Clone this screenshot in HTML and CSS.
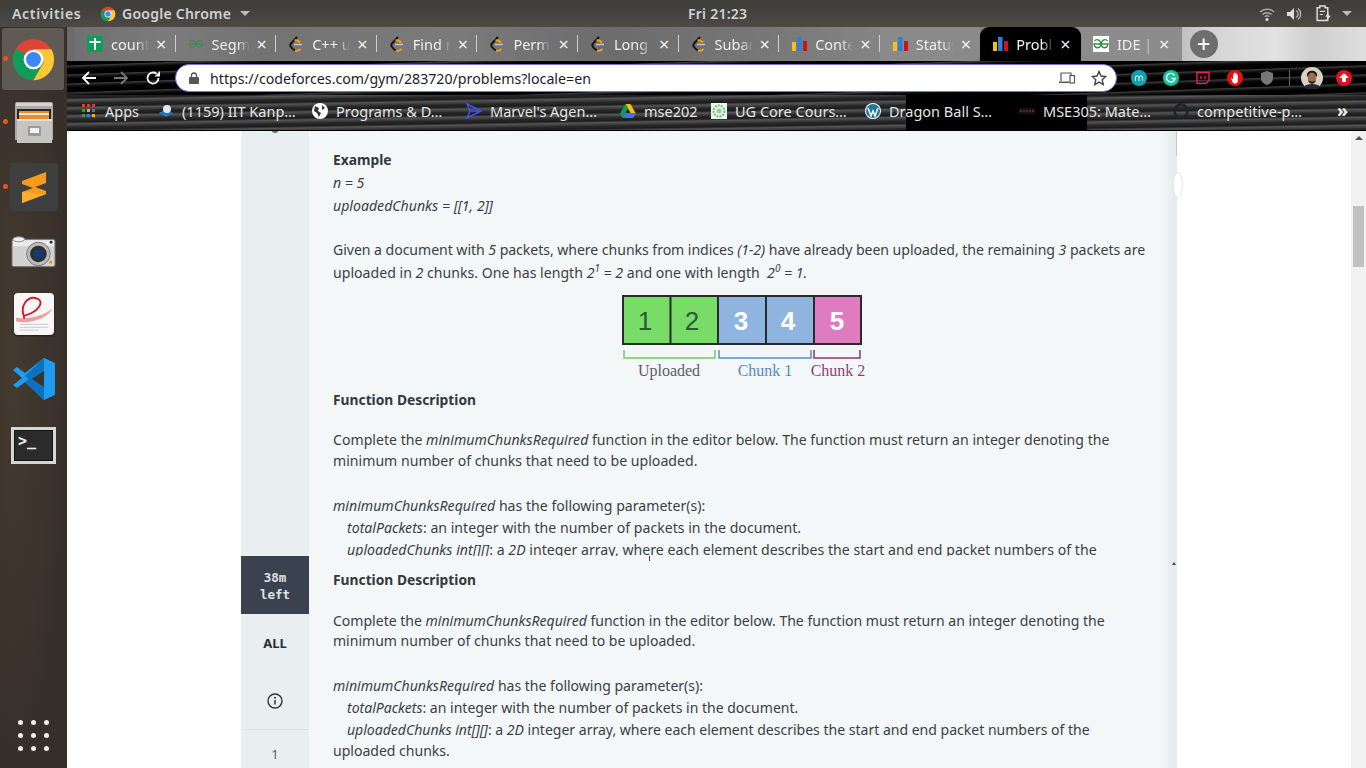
FILE: index.html
```html
<!DOCTYPE html>
<html lang="en">
<head>
<meta charset="utf-8">
<title>Problems</title>
<link rel="stylesheet" href="styles.css">
</head>
<body>
<header class="topbar">
  <span class="activities">Activities</span>
  <span class="appmenu">
    <svg class="chromeglyph" viewBox="0 0 48 48"><use href="#chrome"/></svg>
    Google Chrome <i class="caret"></i>
  </span>
  <span class="clock">Fri 21:23</span>
  <span class="tray">
    <svg class="t1" viewBox="0 0 16 16"><path d="M1 6a10 10 0 0 1 14 0M3.500 8.500a6.500 6.500 0 0 1 9 0M5.800 10.800a3.200 3.200 0 0 1 4.400 0" fill="none" stroke="#aaa" stroke-width="1.500"/><circle cx="8" cy="13.500" r="1.600" fill="#ddd"/></svg>
    <svg class="t2" viewBox="0 0 16 16"><path d="M1 6h3l4-4v12l-4-4H1z" fill="#ddd"/><path d="M10 4.500a4 4 0 0 1 0 7M12 2.500a7 7 0 0 1 0 11" fill="none" stroke="#bbb" stroke-width="1.300"/></svg>
    <svg class="t3" viewBox="0 0 16 16"><path d="M2 2.500h2.500V1h5v1.500H12v12H2z" fill="none" stroke="#ddd" stroke-width="1.400"/><path d="M4.500 6h5M4.500 9h3" stroke="#ddd"/><path d="M12.500 7l-3 4h2l-1 4 4.500-5h-2z" fill="#ddd"/></svg>
    <i class="caret"></i>
  </span>
</header>

<div class="desktop">
  <aside class="dock">
    <div class="dockitem tile"><i class="pip"></i>
      <svg class="ic52" viewBox="0 0 48 48"><use href="#chrome"/></svg></div>
    <div class="dockitem files"><i class="pip"></i>
      <svg class="ic48" viewBox="0 0 40 41"><path d="M2 0h36l1 2v36H1V2z" fill="#a9a9a6"/><rect x="2" y="1" width="36" height="3" fill="#d4d4d1"/><rect x="3" y="7" width="34" height="12" fill="#2d241b"/><rect x="5" y="9" width="30" height="10" fill="#e88c2f"/><rect x="5" y="11" width="30" height="2" fill="#fde9c9"/><rect x="3" y="17" width="35" height="24" fill="#c4c4c1"/><rect x="3" y="17" width="35" height="2" fill="#e2e2df"/><rect x="14" y="24" width="13" height="10" rx="1" fill="#9a9a97"/><rect x="16" y="26" width="9" height="5" fill="#f2f2f0"/></svg></div>
    <div class="dockitem sublime"><i class="pip"></i>
      <div class="sublimetile"><svg class="ic32" viewBox="0 0 24 31"><path d="M0 9L24 0v11L13 15l11 4v3L0 31V20l11-4-11-4z" fill="#f89a1c"/><path d="M0 20l24 2L0 31z" fill="#fbae2c"/></svg></div></div>
    <div class="dockitem cam">
      <svg class="ic46" viewBox="0 0 46 32"><rect x="1" y="3" width="44" height="28" rx="2" fill="#d2d2d2" stroke="#6d6d6d"/><rect x="2" y="4" width="42" height="6" fill="#ececec"/><circle cx="28" cy="18" r="12" fill="#bbb" stroke="#777"/><circle cx="28" cy="18" r="8.500" fill="#2f2f2f"/><rect x="23" y="14" width="10" height="8" rx="2" fill="#123a75"/><rect x="39" y="25" width="3" height="3" fill="#e69a1f"/><ellipse cx="8" cy="3" rx="6" ry="2.500" fill="#f0f0f0" stroke="#888"/><circle cx="41" cy="6" r="1.500" fill="#333"/></svg></div>
    <div class="dockitem doc">
      <div class="pdf"><svg class="ic40" viewBox="0 0 40 40"><path d="M1 24c14 2 29-2 39-10-6 11-24 17-39 14z" fill="#e8a0a5"/><path d="M10 25C4 10 14 0 24 4c7 3 1 14-15 18" fill="none" stroke="#d01c28" stroke-width="2"/><path d="M5 31h30M5 34h30M5 37h20" stroke="#c9c9c9"/></svg></div></div>
    <div class="dockitem code">
      <svg class="ic44" viewBox="0 0 44 44"><path d="M32 1l11 5v32l-11 5-19-18-8 6-4-3 9-7-9-8 4-3 8 6z" fill="#1f9cf0"/><path d="M32 1l-19 18 7 6 12-10v14l-12-10-7 6 19 18z" fill="#0d72bd"/><path d="M32 14L20 22l12 8z" fill="#3c342c"/></svg></div>
    <div class="dockitem term">
      <div class="termbox"><span class="prompt">&gt;_</span></div></div>
    <div class="dots"><i></i><i></i><i></i><i></i><i></i><i></i><i></i><i></i><i></i></div>
  </aside>

  <div class="browser">
    <nav class="tabstrip">
      <div class="tab"><svg class="fav" viewBox="0 0 16 16"><rect width="16" height="16" rx="1" fill="#0f9d58"/><path d="M2.500 6h11M8 2v12" stroke="#fff" stroke-width="2"/></svg><span class="tabtext">count</span><span class="x">×</span></div>
      <div class="tab"><svg class="fav" viewBox="0 0 16 16"><use href="#gfgs"/></svg><span class="tabtext">Segment</span><span class="x">×</span></div>
      <div class="tab"><svg class="fav" viewBox="0 0 16 16"><use href="#leet"/></svg><span class="tabtext">C++ u</span><span class="x">×</span></div>
      <div class="tab"><svg class="fav" viewBox="0 0 16 16"><use href="#leet"/></svg><span class="tabtext">Find r</span><span class="x">×</span></div>
      <div class="tab"><svg class="fav" viewBox="0 0 16 16"><use href="#leet"/></svg><span class="tabtext">Perm</span><span class="x">×</span></div>
      <div class="tab"><svg class="fav" viewBox="0 0 16 16"><use href="#leet"/></svg><span class="tabtext">Long</span><span class="x">×</span></div>
      <div class="tab"><svg class="fav" viewBox="0 0 16 16"><use href="#leet"/></svg><span class="tabtext">Subar</span><span class="x">×</span></div>
      <div class="tab"><svg class="fav" viewBox="0 0 16 16"><use href="#bars"/></svg><span class="tabtext">Conte</span><span class="x">×</span></div>
      <div class="tab last"><svg class="fav" viewBox="0 0 16 16"><use href="#bars"/></svg><span class="tabtext">Status</span><span class="x">×</span></div>
      <div class="tab active"><svg class="fav" viewBox="0 0 16 16"><use href="#bars"/></svg><span class="tabtext">Probl</span><span class="x">×</span></div>
      <div class="tab ide"><svg class="fav" viewBox="0 0 16 16"><rect width="16" height="16" fill="#fff"/><use href="#gfg"/></svg><span class="tabtext">IDE | G</span><span class="x">×</span></div>
      <span class="newtab">+</span>
    </nav>

    <div class="toolbar">
      <svg class="navicon" viewBox="0 0 16 16"><path d="M15 8H2M8 2L2 8l6 6" fill="none" stroke="#fff" stroke-width="1.800"/></svg>
      <svg class="navicon" viewBox="0 0 16 16"><path d="M1 8h13M8 2l6 6-6 6" fill="none" stroke="#777" stroke-width="1.800"/></svg>
      <svg class="navicon" viewBox="0 0 16 16"><path d="M13.500 8A5.500 5.500 0 1 1 11.500 3.800" fill="none" stroke="#fff" stroke-width="1.800"/><path d="M9.500 6.500H15V1z" fill="#fff"/></svg>
      <div class="omnibox">
        <svg class="lock" viewBox="0 0 10 12"><path d="M2.500 5V3.500a2.500 2.500 0 0 1 5 0V5" fill="none" stroke="#555" stroke-width="1.300"/><rect y="5" width="10" height="7" rx="1" fill="#555"/></svg>
        <span class="url">https://codeforces.com/gym/283720/problems?locale=en</span>
        <svg class="devices" viewBox="0 0 16 12"><path d="M2 9V1h10v2" fill="none" stroke="#555" stroke-width="1.200"/><path d="M0 9.500h10v1.500H0z" fill="#555"/><rect x="11" y="3.500" width="4.500" height="7.500" fill="none" stroke="#555" stroke-width="1.200"/></svg>
        <svg class="star" viewBox="0 0 16 16"><path d="M8 1.500l2 4.500 4.800.5-3.600 3.200 1 4.800L8 12.100l-4.200 2.400 1-4.800L1.200 6.500 6 6z" fill="none" stroke="#444" stroke-width="1.400"/></svg>
      </div>
      <div class="exts">
        <svg class="ext" viewBox="0 0 16 16"><circle cx="8" cy="8" r="8" fill="#0fa3b1"/><path d="M4.500 11V6.500M4.500 7.500c0-2 3.500-2 3.500 0V11M8 7.500c0-2 3.500-2 3.500 0V11" fill="none" stroke="#fff"/></svg>
        <svg class="ext" viewBox="0 0 16 16"><circle cx="8" cy="8" r="8" fill="#15c39a"/><path d="M11.500 5.500a4.300 4.300 0 1 0 .5 3H8.500" fill="none" stroke="#fff" stroke-width="1.400"/></svg>
        <svg class="ext" viewBox="0 0 16 16"><path d="M2 2.500h12v8l-3 3H2z" fill="none" stroke="#e0245e" stroke-width="1.400"/><path d="M6 6v3M10 6v3" stroke="#e0245e" stroke-width="1.400"/></svg>
        <svg class="ext" viewBox="0 0 16 16"><circle cx="8" cy="8" r="8" fill="#e60f0f"/><path d="M4 7.500l2 2V4.500a.6.6 0 0 1 1.200 0V7V3a.6.6 0 0 1 1.200 0v4V3.500a.6.6 0 0 1 1.200 0V7.500V5a.6.6 0 0 1 1.200 0v6c0 1.500-1 2.500-2.500 2.500H7.500C6 13.500 5.500 12 5 11z" fill="#fff"/></svg>
        <svg class="ext" viewBox="0 0 16 16"><path d="M8 1l6 2v5c0 4-3 6-6 7-3-1-6-3-6-7V3z" fill="#777"/></svg>
        <i class="extsep"></i>
        <svg class="avatar" viewBox="0 0 22 22"><circle cx="11" cy="11" r="11" fill="#d8d2c4"/><path d="M6 9C5 2 17 2 16 9l-1 1H7z" fill="#1d1712"/><ellipse cx="11" cy="11" rx="4.200" ry="5.500" fill="#9c6c4e"/><path d="M7 13c1 5 7 5 8 0-1 2-7 2-8 0z" fill="#251a14"/><path d="M3 20c2-4 14-4 16 0a11 11 0 0 1-16 0z" fill="#232a33"/></svg>
        <svg class="ext" viewBox="0 0 16 16"><circle cx="8" cy="8" r="8" fill="#e60f1d"/><path d="M8 3l5 5h-3v4H6V8H3z" fill="#fff"/></svg>
      </div>
    </div>

    <div class="bookmarks">
      <div class="bm apps"><svg class="fav" viewBox="0 0 13 13"><path d="M0 0h3v3H0z" fill="#e23b2e"/><path d="M5 0h3v3H5z" fill="#e23b2e"/><path d="M10 0h3v3h-3z" fill="#e23b2e"/><path d="M0 5h3v3H0z" fill="#2f9e44"/><path d="M5 5h3v3H5z" fill="#f4b400"/><path d="M10 5h3v3h-3z" fill="#3b78e7"/><path d="M0 10h3v3H0z" fill="#2f9e44"/><path d="M5 10h3v3H5z" fill="#3b78e7"/><path d="M10 10h3v3h-3z" fill="#f4b400"/></svg><span>Apps</span></div>
      <div class="bm"><svg class="fav" viewBox="0 0 16 16"><path d="M1 10l7-4 7 4-7 4z" fill="#1b78c8"/><circle cx="9" cy="6" r="4" fill="#e3e7ea"/></svg><span>(1159) IIT Kanp…</span></div>
      <div class="bm"><svg class="fav" viewBox="0 0 16 16"><circle cx="8" cy="8" r="8" fill="#fff"/><path d="M3 3l4 2-1 3 3 2-2 4-2-4-3-2zM10 2l3 3-3 2z" fill="#333"/></svg><span>Programs &amp; D…</span></div>
      <div class="bm"><svg class="fav" viewBox="0 0 16 16"><path d="M1 1l14 7-14 7 3-7zM4 8h11" fill="none" stroke="#3f51e5" stroke-width="1.600"/></svg><span>Marvel's Agen…</span></div>
      <div class="bm short"><svg class="fav" viewBox="0 0 16 16"><path d="M5.500 1h5l5 9h-5z" fill="#f4c20d"/><path d="M5.500 1L0 10.500 2.600 15l5.200-9z" fill="#0f9d58"/><path d="M2.600 15h10.500l2.900-5H5.300z" fill="#3b78e7"/></svg><span>mse202</span></div>
      <div class="bm"><svg class="fav" viewBox="0 0 16 16"><rect width="16" height="16" fill="#eef5ee"/><circle cx="8" cy="8" r="5.500" fill="none" stroke="#6cc07a" stroke-width="2" stroke-dasharray="2 1"/><circle cx="8" cy="8" r="2.500" fill="#8fd19a"/></svg><span>UG Core Cours…</span></div>
      <div class="bm"><svg class="fav" viewBox="0 0 16 16"><circle cx="8" cy="8" r="8" fill="#fff"/><circle cx="8" cy="8" r="7" fill="#21759b"/><path d="M3 5l3 8 2-5 2 5 3-8" fill="none" stroke="#fff" stroke-width="1.500"/></svg><span>Dragon Ball S…</span></div>
      <div class="bm"><svg class="fav" viewBox="0 0 16 6"><rect width="16" height="6" fill="#1c1010"/><path d="M1 3h14" stroke="#6d2222" stroke-width="2" stroke-dasharray="2 1"/></svg><span>MSE305: Mate…</span></div>
      <div class="bm"><svg class="fav" viewBox="0 0 16 16"><circle cx="8" cy="8" r="6.500" fill="none" stroke="#1d2430" stroke-width="2.600"/></svg><span>competitive-p…</span></div>
      <span class="more">»</span>
    </div>

    <main class="page">
      <div class="panel">
        <section class="sheet upper">
          <div class="rail railtop"><i class="remnant"></i></div>
          <div class="prose">
            <p class="h h-ex">Example</p>
            <p class="l"><em>n = 5</em></p>
            <p class="l"><em>uploadedChunks = [[1, 2]]</em></p>
            <p class="l gap-a tight">Given a document with <em>5</em> packets, where chunks from indices <em>(1-2)</em> have already been uploaded, the remaining <em>3</em> packets are</p>
            <p class="l">uploaded in <em>2</em> chunks. One has length <em>2<sup>1</sup> = 2</em> and one with length <em>&nbsp;2<sup>0</sup> = 1.</em></p>
            <svg class="diagram" viewBox="0 0 245 86" role="img" aria-label="Chunks diagram">
              <rect x="1" y="1" width="47.500" height="48" fill="#77dd66"/>
              <rect x="48.500" y="1" width="47.500" height="48" fill="#77dd66"/>
              <rect x="96" y="1" width="48" height="48" fill="#8fb4e0"/>
              <rect x="144" y="1" width="48" height="48" fill="#8fb4e0"/>
              <rect x="192" y="1" width="47" height="48" fill="#df7cc0"/>
              <path d="M1 1h238v48H1zM48.500 1v48M96 1v48M144 1v48M192 1v48" fill="none" stroke="#2a2a2a" stroke-width="2"/>
              <text class="d-num dark" x="23" y="35">1</text>
              <text class="d-num dark" x="70" y="35">2</text>
              <text class="d-num bold" x="119" y="35">3</text>
              <text class="d-num bold" x="166" y="35">4</text>
              <text class="d-num bold" x="215" y="35">5</text>
              <path d="M2 55v8h91v-8" fill="none" stroke="#7cc468" stroke-width="1.500"/>
              <path d="M97 55v8h92v-8" fill="none" stroke="#5a8fc4" stroke-width="1.500"/>
              <path d="M192 55v8h46v-8" fill="none" stroke="#8b3a6a" stroke-width="1.500"/>
              <text class="d-lab c-u" x="47" y="81">Uploaded</text>
              <text class="d-lab c-1" x="143" y="81">Chunk 1</text>
              <text class="d-lab c-2" x="216" y="81">Chunk 2</text>
            </svg>
            <p class="h h-fd">Function Description</p>
            <p class="l gap-b">Complete the <em>minimumChunksRequired</em> function in the editor below. The function must return an integer denoting the</p>
            <p class="l l3">minimum number of chunks that need to be uploaded.</p>
            <p class="l gap-c"><em>minimumChunksRequired</em> has the following parameter(s):</p>
            <p class="l ind"><em>totalPackets</em>: an integer with the number of packets in the document.</p>
            <p class="l ind wide up"><em>uploadedChunks int[][]</em>: a <em>2D</em> integer array, <span class="sq-g">where each</span> elem<span class="sq-b">ent des</span>crib<span class="sq-g">es the s</span>tart and end packet numbers of the</p>
          </div>
        </section>
        <section class="sheet lower">
          <div class="rail">
            <div class="timer">38m<br>left</div>
            <div class="allbtn">ALL</div>
            <div class="infobtn"><svg class="info" viewBox="0 0 16 16"><circle cx="8" cy="8" r="7" fill="none" stroke="#333" stroke-width="1.400"/><path d="M8 7v4.500" stroke="#333" stroke-width="1.500"/><circle cx="8" cy="4.800" r="1" fill="#333"/></svg></div>
            <div class="railnum">1</div>
          </div>
          <div class="prose second">
            <p class="h h-fd2">Function Description</p>
            <p class="m gap-d">Complete the <em>minimumChunksRequired</em> function in the editor below. The function must return an integer denoting the</p>
            <p class="m">minimum number of chunks that need to be uploaded.</p>
            <p class="m gap-e"><em>minimumChunksRequired</em> has the following parameter(s):</p>
            <p class="m m2 ind nudge"><em>totalPackets</em>: an integer with the number of packets in the document.</p>
            <p class="m m2 ind"><em>uploadedChunks int[][]</em>: a <em>2D</em> integer array, where each element describes the start and end packet numbers of the</p>
            <p class="m">uploaded chunks.</p>
          </div>
        </section>
      </div>
      <i class="edge-line"></i>
      <i class="edge-handle"></i>
      <i class="edge-arrow"></i>
      <i class="ibeam"></i>
      <div class="scrollbar"><i class="uparrow"></i><i class="thumb"></i></div>
    </main>
  </div>
</div>

<svg class="defs" aria-hidden="true">
  <defs>
    <g id="chrome">
      <circle cx="24" cy="24" r="22" fill="#db4437"/>
      <path d="M24 24L5 35A22 22 0 0 0 24 46z" fill="#0f9d58"/>
      <path d="M5 13A22 22 0 0 0 24 46l11-19z" fill="#0f9d58"/>
      <path d="M24 13h19a22 22 0 0 1-19 33l11-19z" fill="#fcc934"/>
      <circle cx="24" cy="24" r="10.500" fill="#fff"/>
      <circle cx="24" cy="24" r="8" fill="#4285f4"/>
    </g>
    <g id="leet" fill="none" stroke-width="2">
      <path d="M9 1L2.500 8c-1 2 2 5 4.500 6.500" stroke="#111"/>
      <path d="M7 14.500c2 .7 4 0 5.500-1.500" stroke="#f59e0b"/>
      <path d="M6.500 4.500c2-.5 4 .5 5.500 2" stroke="#f59e0b"/>
      <path d="M6 8.500h8" stroke="#c4c4c4" stroke-width="1.500"/>
    </g>
    <g id="bars">
      <rect x="1" y="6" width="4" height="9" fill="#f4c20d"/>
      <rect x="6" y="1" width="4.500" height="14" fill="#2f7ed8"/>
      <rect x="12" y="5" width="4" height="10" fill="#d0121b"/>
    </g>
    <g id="gfg" fill="none" stroke="#2f8d46" stroke-width="1.300">
      <path d="M8 8H15C14 13 9 13 8 8c1-5 5-5 6.500-3M8 8H1c1 5 6 5 7 0C7 3 3 3 1.500 5"/>
    </g>
    <g id="gfgs" fill="none" stroke="#2f8d46" stroke-width="1">
      <path d="M8 8H15C14 12 9 12 8 8c1-4 5-4 6.500-2M8 8H1c1 4 6 4 7 0C7 4 3 4 1.500 6"/>
    </g>
  </defs>
</svg>
</body>
</html>
```

FILE: styles.css
```css
* { box-sizing: border-box; }
html, body { margin: 0; padding: 0; width: 1366px; height: 768px; overflow: hidden; }
body { font-family: "Noto Sans", "Open Sans", sans-serif; background: #3c342c; }
p { margin: 0; white-space: nowrap; }
i { display: block; }
.defs { position: absolute; width: 0; height: 0; }

/* GNOME top bar */
.topbar { height: 27px; background: linear-gradient(#3d3c38, #4b4a45); color: #cfd2d2; display: flex; align-items: center; font-size: 14px; font-weight: 600; letter-spacing: .25px; position: relative; }
.activities { margin-left: 12px; width: 88px; letter-spacing: .7px; }
.appmenu { display: flex; align-items: center; gap: 6px; }
.chromeglyph { width: 16px; height: 16px; }
.caret { width: 0; height: 0; border: 5px solid transparent; border-top: 5px solid #bbb; border-bottom: 0; margin-left: 3px; }
.clock { position: absolute; left: 688px; top: 4px; }
.tray { position: absolute; right: 0; top: 0; height: 27px; display: flex; align-items: center; width: 107px; }
.t1 { width: 16px; height: 16px; }
.t2 { width: 16px; height: 16px; margin-left: 11px; }
.t3 { width: 17px; height: 17px; margin-left: 13px; }
.tray .caret { margin-left: 10px; }

.desktop { display: flex; height: 741px; }

/* Dock */
.dock { width: 67px; flex: none; background: radial-gradient(ellipse at 20% 45%, #443a30, #37302a 70%); display: flex; flex-direction: column; align-items: center; position: relative; }
.dockitem { width: 67px; display: flex; align-items: center; justify-content: center; position: relative; flex: none; }
.tile { height: 62px; margin-top: 1px; }
.tile::before { content: ""; position: absolute; left: 2px; top: 0; width: 62px; height: 62px; border-radius: 3px; background: #5f5a53; }
.tile svg { position: relative; }
.files { height: 62px; margin-top: 1px; }
.sublime { height: 64px; margin-top: 2px; }
.cam { height: 66px; }
.doc { height: 58px; }
.code { height: 72px; }
.term { height: 60px; }
.pip { position: absolute; left: 3px; top: 50%; margin-top: -3px; width: 5px; height: 5px; border-radius: 50%; background: #e5561f; }
.ic52 { width: 45px; height: 45px; }
.ic48 { width: 40px; height: 41px; }
.ic32 { width: 24px; height: 31px; }
.ic46 { width: 45px; height: 32px; }
.ic40 { width: 38px; height: 38px; }
.ic44 { width: 44px; height: 44px; }
.sublimetile { width: 48px; height: 48px; border-radius: 4px; background: #3f3f3f; display: flex; align-items: center; justify-content: center; }
.pdf { width: 40px; height: 42px; border-radius: 4px; background: #f7f7f5; display: flex; align-items: center; justify-content: center; box-shadow: 0 1px 2px #0008; }
.termbox { width: 45px; height: 37px; background: #2b2b2b; border: 3px solid #d6d6d4; box-shadow: inset 0 0 0 1px #111; color: #eee; font: 700 15px/22px "DejaVu Sans Mono", monospace; padding-left: 4px; }
.dots { position: absolute; left: 18px; top: 693px; width: 30px; display: grid; grid-template-columns: repeat(3, 5px); gap: 8px 8px; }
.dots i { width: 5px; height: 5px; border-radius: 50%; background: #eee; }

.browser { flex: 1; display: flex; flex-direction: column; min-width: 0; }

/* Tab strip */
.tabstrip { height: 34px; display: flex; padding-left: 8px; background: linear-gradient(90deg, #6a6a6a 0, #7c7c7c 8%, #6f6f6f 15%, #7b7b7b 30%, #636363 42%, #787878 55%, #8a8a8a 62%, #7e7e7e 72%, #8f8f8f 80%, #9c9c9c 82%, #d4d4d4 88%, #e2e2e2 93%, #cfcfcf 96%, #dedede 100%); align-items: stretch; }
.tab { width: 100.6px; flex: none; display: flex; align-items: center; padding-left: 12px; position: relative; color: #eee; font-size: 14.500px; background: #7b7b7b66; }
.tab::after { content: ""; position: absolute; right: 0; top: 8px; height: 17px; width: 1px; background: #cfcfcf; }
.tab.last { border-radius: 0 0 8px 0; background: #8a8a8a; }
.tab.last::after, .tab.active::after, .tab.ide::after { display: none; }
.tab.active { background: #000; border-radius: 9px 9px 0 0; color: #f4f4f4; }
.tab.ide { background: #8c8c8c; border-radius: 0 0 0 8px; }
.fav { width: 16px; height: 16px; flex: none; }
.tabtext { margin-left: 8px; width: 38px; overflow: hidden; white-space: nowrap; -webkit-mask-image: linear-gradient(90deg, #000 68%, transparent); mask-image: linear-gradient(90deg, #000 68%, transparent); }
.x { position: absolute; left: 81px; top: 7px; font-size: 18px; line-height: 20px; color: #f2f2f2; }
.active .x { left: 80px; }
.ide .x { left: 78px; }
.newtab { width: 28px; height: 28px; border-radius: 50%; background: #6e6e6e; color: #fff; margin: 3px 0 0 8px; text-align: center; font-size: 24px; line-height: 27px; flex: none; }

/* Toolbar */
.toolbar { height: 34px; display: flex; align-items: center; padding-left: 14px; background: repeating-linear-gradient(178deg, #000 0, #000 4px, #3a3a3a 5px, #111 7px, #000 9px); position: relative; }
.navicon { width: 16px; height: 16px; flex: none; margin-right: 16px; }
.omnibox { width: 942px; height: 28px; margin-left: -2px; background: #fff; border: 1px solid #7e72dc; border-radius: 14px; display: flex; align-items: center; padding-left: 13px; flex: none; }
.lock { width: 10px; height: 12px; flex: none; }
.url { margin-left: 11px; width: 849px; font-size: 14.200px; color: #1d1d1d; white-space: nowrap; }
.devices { width: 16px; height: 12px; flex: none; }
.star { width: 16px; height: 16px; margin-left: 16px; flex: none; }
.exts { display: flex; align-items: center; margin-left: 14px; }
.ext { width: 16px; height: 16px; margin-right: 16px; flex: none; }
.extsep { width: 1px; height: 16px; background: #666; margin: 0 11px 0 -2px; }
.avatar { width: 22px; height: 22px; margin-right: 13px; flex: none; }

/* Bookmarks */
.bookmarks { height: 36px; display: flex; align-items: center; padding-left: 15px; color: #e6e6e6; font-size: 14.500px; padding-bottom: 4px; background: linear-gradient(90deg, #0000 0, #0000 64.600%, #000 64.600%, #000 78.500%, #0000 78.500%), repeating-linear-gradient(179deg, #2a2a2a 0, #1c1c1c 3px, #555 5px, #2e2e2e 8px); border-bottom: 1px solid #000; position: relative; }
.bm { width: 154px; flex: none; display: flex; align-items: center; white-space: nowrap; overflow: hidden; gap: 8px; }
.bm .fav { width: 16px; height: 16px; }
.bm.apps { width: 76px; }
.bm.apps .fav { width: 13px; height: 13px; margin-right: 2px; }
.bm.short { width: 91px; }
.more { position: absolute; left: 1270px; top: 5px; font-size: 18px; line-height: 20px; font-weight: 700; color: #eee; }

/* Page */
.page { flex: 1; min-height: 0; background: #fff; display: flex; overflow: hidden; padding-left: 174px; position: relative; }
.panel { width: 936px; flex: none; display: flex; flex-direction: column; color: #3a3f44; overflow: hidden; }
.sheet { display: flex; }
.upper { height: 425px; overflow: hidden; }
.lower { flex: 1; min-height: 0; }
.rail { width: 68px; flex: none; background: #e9eef0; display: flex; flex-direction: column; align-items: center; }
.remnant { width: 6px; height: 2px; background: #777; margin-top: 0; border-radius: 0 0 2px 2px; }
.prose { flex: 1; padding-left: 24px; background: linear-gradient(90deg, #f3f7f8 0, #f3f7f8 98%, #e6e9ea 100%); min-width: 0; }
.h { font-weight: 700; font-size: 13.800px; line-height: 20px; color: #33383d; }
.h-ex { padding-top: 19px; height: 41px; }
.l { font-size: 14.100px; line-height: 22.500px; height: 22.500px; letter-spacing: .01px; }
.tight { letter-spacing: -.05px; }
.wide { letter-spacing: .03px; }
.up { margin-top: -1px; }
.l3 { height: 21px; line-height: 21px; margin-top: -2px; }
em { font-style: italic; }
sup { font-size: 10px; line-height: 0; }
.gap-a { margin-top: 22px; }
.diagram { display: block; width: 245px; height: 86px; margin: 11px 0 0 289px; }
.d-num { font: 400 26px "Liberation Sans", sans-serif; text-anchor: middle; }
.d-num.dark { fill: #2e5a32; }
.d-num.bold { font-weight: 700; fill: #fff; }
.d-lab { font: 400 16px "Liberation Serif", serif; text-anchor: middle; }
.c-u { fill: #5e5a66; }
.c-1 { fill: #4f8ac2; }
.c-2 { fill: #8a3f72; }
.h-fd { margin-top: 9px; height: 20px; }
.gap-b { margin-top: 19px; }
.gap-c { margin-top: 24px; }
.ind { padding-left: 14px; }
.nudge { margin-top: 1px; }
.sq-g { text-decoration: underline dotted #555; text-underline-offset: 3px; }
.sq-b { text-decoration: underline dotted #3b82c4; text-underline-offset: 3px; }
.timer { width: 68px; height: 58px; background: #39424e; color: #dfe3e6; font: 700 12.500px/17px "DejaVu Sans Mono", monospace; text-align: center; padding-top: 13px; flex: none; }
.allbtn { height: 58px; font-size: 13px; font-weight: 700; color: #2b2f33; line-height: 58px; flex: none; }
.infobtn { width: 68px; height: 58px; display: flex; align-items: center; justify-content: center; border-bottom: 1px solid #dde2e4; flex: none; }
.info { width: 16px; height: 16px; }
.railnum { font-size: 13px; color: #5a6068; margin-top: 15px; }
.second { padding-top: 14px; }
.h-fd2 { height: 20px; }
.m { font-size: 14.050px; line-height: 20.500px; height: 20.500px; letter-spacing: -.01px; }
.m2 { height: 22px; line-height: 22px; }
.gap-d { margin-top: 20.500px; }
.gap-e { margin-top: 24px; }

/* Overlays on the page edge */
.edge-line { position: absolute; left: 1109px; top: 0; width: 1px; height: 25px; background: #c8c8c8; }
.edge-handle { position: absolute; left: 1106px; top: 41px; width: 10px; height: 26px; border-radius: 50%; background: #fff; border: 1px solid #e6e8e8; }
.edge-arrow { position: absolute; left: 1105px; top: 431px; width: 0; height: 0; border: 2px solid transparent; border-bottom: 3px solid #444; border-top: 0; }
.ibeam { position: absolute; left: 582px; top: 425px; width: 1px; height: 5px; background: #444; }

/* Scrollbar */
.scrollbar { position: absolute; right: 0; top: 0; bottom: 0; width: 15px; background: #f1f1f1; }
.uparrow { position: absolute; left: 4px; top: 5px; width: 0; height: 0; border: 4px solid transparent; border-bottom: 4px solid #505050; border-top: 0; }
.thumb { position: absolute; left: 2px; top: 75px; width: 11px; height: 61px; background: #c1c1c1; }
```
